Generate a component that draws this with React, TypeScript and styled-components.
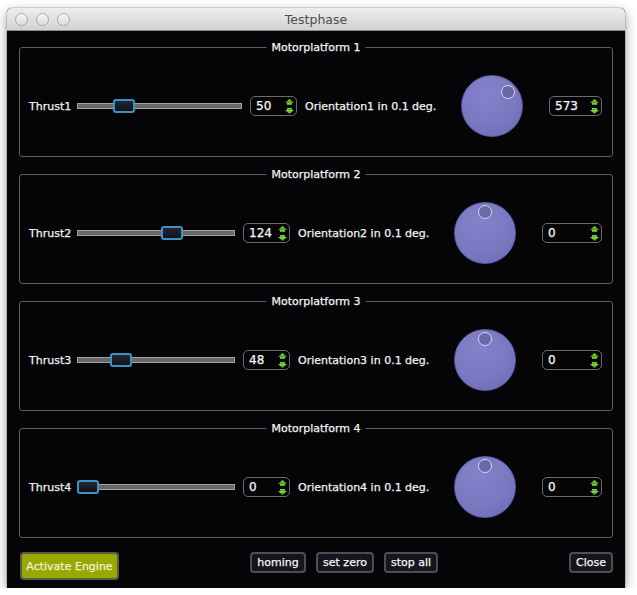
import React from "react";
import styled, { createGlobalStyle } from "styled-components";

const GlobalStyle = createGlobalStyle`
  html, body { margin: 0; padding: 0; background: #ffffff; }
  body { font-family: "DejaVu Sans", "Liberation Sans", sans-serif; }
`;

const Window = styled.div`
  margin: 8px 0 0 7px;
  width: 618px;
  height: 580px;
  display: flex;
  flex-direction: column;
  border-radius: 5px 5px 0 0;
  overflow: hidden;
  box-shadow: 0 4px 12px rgba(0, 0, 0, 0.4), 0 0 0 1px rgba(0, 0, 0, 0.12);
  background: #050508;
`;

const TitleBar = styled.div`
  flex: none;
  height: 22px;
  display: grid;
  grid-template-columns: 1fr auto 1fr;
  align-items: center;
  background: linear-gradient(#eeeeee, #d2d2d2);
  border-bottom: 1px solid #8c8c8c;
`;

const Lights = styled.div`
  display: flex;
  gap: 8px;
  padding-left: 8px;
`;

const Light = styled.span`
  width: 11px;
  height: 11px;
  border-radius: 50%;
  border: 1px solid #a9a9a9;
  background: linear-gradient(#f6f6f6, #dcdcdc);
`;

const Title = styled.div`
  font-size: 12.5px;
  color: #4c4c4c;
`;

const Body = styled.div`
  flex: 1;
  display: flex;
  flex-direction: column;
  gap: 17px;
  padding: 16px 12px 0 12px;
  -webkit-text-stroke: 0.25px currentColor;
`;

const Group = styled.div`
  position: relative;
  height: 110px;
  box-sizing: border-box;
  border: 1px solid #5e5e5e;
  border-radius: 3px;
  display: flex;
  align-items: center;
  padding: 8px 10px 0 9px;
`;

const Legend = styled.div`
  position: absolute;
  top: -8px;
  left: 50%;
  transform: translateX(-50%);
  padding: 0 5px;
  background: #050508;
  color: #f4f4f4;
  font-size: 11px;
  line-height: 15px;
  white-space: nowrap;
`;

const Label = styled.div<{ $w: number }>`
  width: ${(p) => p.$w}px;
  flex: none;
  color: #f2f2f2;
  font-size: 11px;
  white-space: nowrap;
`;

const Slider = styled.div<{ $w: number }>`
  position: relative;
  width: ${(p) => p.$w}px;
  height: 14px;
  flex: none;
  display: flex;
  align-items: center;
`;

const Track = styled.div`
  width: 100%;
  height: 6px;
  box-sizing: border-box;
  border: 1px solid #a2a2a2;
  background: #686868;
`;

const Handle = styled.div`
  position: absolute;
  top: 0;
  width: 22px;
  height: 14px;
  box-sizing: border-box;
  border: 2px solid #3993c9;
  border-radius: 3px;
  background: linear-gradient(#262632, #111118);
`;

const Spin = styled.div<{ $w?: number }>`
  flex: ${(p) => (p.$w ? "none" : "1")};
  width: ${(p) => (p.$w ? `${p.$w}px` : "auto")};
  margin-left: ${(p) => (p.$w ? 8 : 20)}px;
  height: 20px;
  box-sizing: border-box;
  border: 1px solid #6c6c6c;
  border-radius: 5px;
  display: flex;
  align-items: center;
  justify-content: space-between;
  padding: 0 2px 0 5px;
  color: #f6f6f6;
  font-size: 12px;
`;

const Arrows = styled.div`
  display: flex;
  flex-direction: column;
  gap: 3px;
`;

const Orientation = styled.div`
  width: 150px;
  margin-left: 8px;
  flex: none;
  color: #f2f2f2;
  font-size: 11px;
  white-space: nowrap;
`;

const DialBox = styled.div`
  width: 74px;
  flex: none;
  display: flex;
  justify-content: center;
`;

const Dial = styled.div`
  position: relative;
  width: 62px;
  height: 62px;
  box-sizing: border-box;
  border-radius: 50%;
  border: 1px solid #5a58a4;
  background: radial-gradient(circle at 40% 30%, #8482ca 0%, #7a78c1 55%, #6b69b0 100%);
`;

const Knob = styled.div`
  position: absolute;
  width: 14px;
  height: 14px;
  box-sizing: border-box;
  border-radius: 50%;
  border: 1px solid #d6d6e6;
  background: #6a68a9;
  transform: translate(-50%, -50%);
`;

const ButtonRow = styled.div`
  display: flex;
  align-items: flex-start;
  margin-top: -3px;
  padding-left: 1px;
`;

const Button = styled.div<{ $w: number; $primary?: boolean }>`
  width: ${(p) => p.$w}px;
  height: ${(p) => (p.$primary ? 28 : 21)}px;
  box-sizing: border-box;
  border: 2px solid ${(p) => (p.$primary ? "#5a5a4a" : "#4e4e52")};
  border-radius: 4px;
  background: ${(p) => (p.$primary ? "#98a800" : "#15151d")};
  color: ${(p) => (p.$primary ? "#eef2d8" : "#f4f4f4")};
  font-size: 11px;
  display: flex;
  align-items: center;
  justify-content: center;
  white-space: nowrap;
`;

const MidButtons = styled.div`
  display: flex;
  gap: 10px;
  margin-left: 131px;
`;

const CloseWrap = styled.div`
  margin-left: auto;
`;

const ArrowIcon = ({ down }: { down?: boolean }) => (
  <svg width="9" height="6" viewBox="0 0 9 6" style={{ display: "block" }}>
    <defs>
      <linearGradient id={down ? "gd" : "gu"} x1="0" y1="0" x2="0" y2="1">
        <stop offset="0" stopColor="#8ee04a" />
        <stop offset="1" stopColor="#3c9a12" />
      </linearGradient>
    </defs>
    <polygon
      points={down ? "0,2 9,2 4.5,6" : "4.5,0 9,4 0,4"}
      fill={`url(#${down ? "gd" : "gu"})`}
    />
    <rect x="2" y={down ? 0 : 4} width="5" height="2" fill={`url(#${down ? "gd" : "gu"})`} />
  </svg>
);

const SpinBox = ({ value, w }: { value: number; w?: number }) => (
  <Spin $w={w}>
    <span>{value}</span>
    <Arrows>
      <ArrowIcon />
      <ArrowIcon down />
    </Arrows>
  </Spin>
);

type Platform = { n: number; thrust: number; orient: number; slider: number };

const platforms: Platform[] = [
  { n: 1, thrust: 50, orient: 573, slider: 165 },
  { n: 2, thrust: 124, orient: 0, slider: 158 },
  { n: 3, thrust: 48, orient: 0, slider: 158 },
  { n: 4, thrust: 0, orient: 0, slider: 158 },
];

const PlatformGroup = ({ p }: { p: Platform }) => {
  const handleLeft = ((p.slider - 22) * p.thrust) / 200;
  const a = ((p.orient / 3600) * 300 * Math.PI) / 180;
  const R = 21.5;
  const kx = 31 - 1 + R * Math.sin(a);
  const ky = 31 - 1 - R * Math.cos(a);
  return (
    <Group>
      <Legend>Motorplatform {p.n}</Legend>
      <Label $w={48}>Thrust{p.n}</Label>
      <Slider $w={p.slider}>
        <Track />
        <Handle style={{ left: handleLeft }} />
      </Slider>
      <SpinBox value={p.thrust} w={47} />
      <Orientation>Orientation{p.n} in 0.1 deg.</Orientation>
      <DialBox>
        <Dial>
          <Knob style={{ left: kx, top: ky }} />
        </Dial>
      </DialBox>
      <SpinBox value={p.orient} />
    </Group>
  );
};

export default function App() {
  return (
    <>
      <GlobalStyle />
      <Window>
        <TitleBar>
          <Lights>
            <Light />
            <Light />
            <Light />
          </Lights>
          <Title>Testphase</Title>
          <div />
        </TitleBar>
        <Body>
          {platforms.map((p) => (
            <PlatformGroup key={p.n} p={p} />
          ))}
          <ButtonRow>
            <Button $w={99} $primary>
              Activate Engine
            </Button>
            <MidButtons>
              <Button $w={56}>homing</Button>
              <Button $w={58}>set zero</Button>
              <Button $w={54}>stop all</Button>
            </MidButtons>
            <CloseWrap>
              <Button $w={44}>Close</Button>
            </CloseWrap>
          </ButtonRow>
        </Body>
      </Window>
    </>
  );
}
